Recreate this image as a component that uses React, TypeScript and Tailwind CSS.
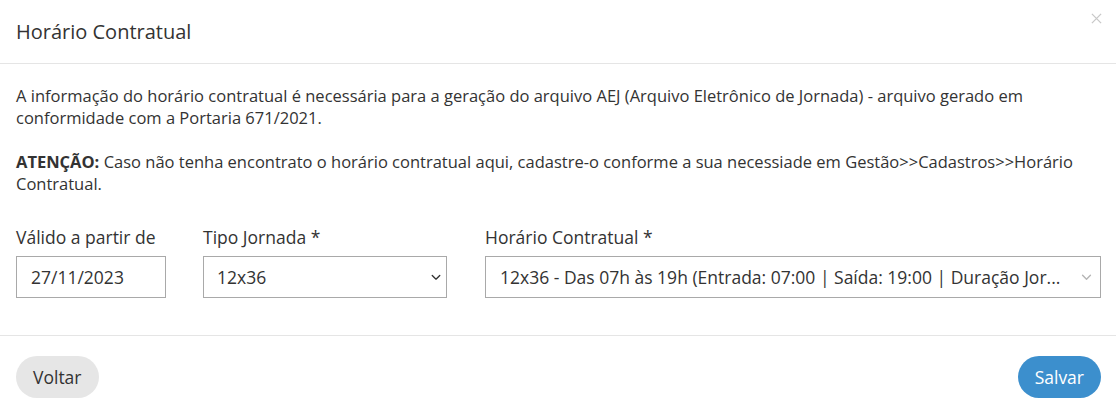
import React from 'react'

function Chevron({ className }: { className: string }) {
  return (
    <svg viewBox="0 0 12 8" className={className} fill="none" stroke="currentColor" strokeWidth="1.6">
      <path d="M1.5 1.5 6 6l4.5-4.5" strokeLinecap="round" strokeLinejoin="round" />
    </svg>
  )
}

export default function App() {
  return (
    <div className="h-[416px] w-[1116px] bg-white text-[#333] [font-family:'Open_Sans',sans-serif]">
      <header className="relative flex h-[64px] items-center border-b border-[#e5e5e5] px-4">
        <h2 className="text-[20px] font-normal text-[#333]">Horário Contratual</h2>
        <button className="absolute right-[14px] top-[13px] text-[#c8c8c8]">
          <svg viewBox="0 0 12 12" className="h-[11px] w-[11px]" stroke="currentColor" strokeWidth="1.4">
            <path d="M1 1l10 10M11 1 1 11" />
          </svg>
        </button>
      </header>

      <section className="h-[272px] border-b border-[#e5e5e5] px-4 pt-[21px]">
        <p className="text-[16.5px] leading-[22px]">
          A informação do horário contratual é necessária para a geração do arquivo AEJ (Arquivo Eletrônico de Jornada) - arquivo gerado em conformidade com a Portaria 671/2021.
        </p>
        <p className="mt-[22px] text-[16.5px] leading-[22px]">
          <strong className="font-bold">ATENÇÃO:</strong> Caso não tenha encontrato o horário contratual aqui, cadastre-o conforme a sua necessiade em Gestão&gt;&gt;Cadastros&gt;&gt;Horário Contratual.
        </p>

        <div className="mt-[31px] flex gap-[37px]">
          <div className="w-[150px] shrink-0">
            <label className="block text-[17.5px] leading-[22px]">Válido a partir de</label>
            <div className="mt-[8px] flex h-[42px] items-center border border-[#a9a9a9] px-[14px] text-[17.5px]">
              27/11/2023
            </div>
          </div>
          <div className="w-[244px] shrink-0">
            <label className="block text-[17.5px] leading-[22px]">Tipo Jornada *</label>
            <div className="mt-[8px] flex h-[42px] items-center justify-between border border-[#a9a9a9] pl-[13px] pr-[5px] text-[17.5px]">
              <span>12x36</span>
              <Chevron className="h-[7px] w-[10px] text-[#333]" />
            </div>
          </div>
          <div className="ml-px mr-[-1px] min-w-0 flex-1">
            <label className="block text-[17.5px] leading-[22px]">Horário Contratual *</label>
            <div className="mt-[8px] flex h-[42px] items-center justify-between border border-[#a9a9a9] pl-[14px] pr-[8px] text-[17.5px]">
              <span className="truncate">12x36 - Das 07h às 19h (Entrada: 07:00 | Saída: 19:00 | Duração Jor...</span>
              <Chevron className="h-[7px] w-[11px] shrink-0 text-[#b5b5b5]" />
            </div>
          </div>
        </div>
      </section>

      <footer className="flex items-center justify-between px-4 pt-[20px]">
        <button className="h-[42px] rounded-full bg-[#e6e6e6] px-[17px] text-[17.5px] text-[#333]">Voltar</button>
        <button className="mr-[-1px] h-[42px] rounded-full bg-[#3c8fcd] px-[17px] text-[17.5px] text-white">Salvar</button>
      </footer>
    </div>
  )
}
